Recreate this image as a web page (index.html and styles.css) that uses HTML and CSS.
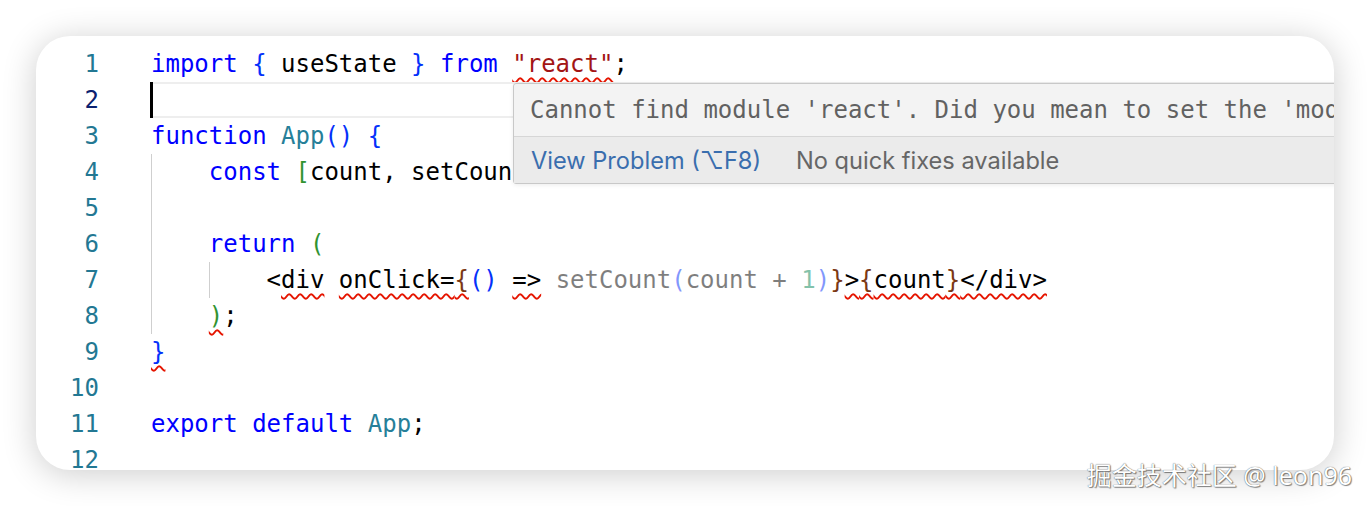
FILE: index.html
```html
<!DOCTYPE html>
<html lang="en">
<head>
<meta charset="utf-8">
<title>Editor</title>
<link rel="stylesheet" href="styles.css">
</head>
<body>
<div class="frame">
  <div class="card">
    <div class="line"><span class="ln">1</span><span class="code"><span class="kw">import</span> <span class="b1">{</span> useState <span class="b1">}</span> <span class="kw">from</span> <span class="sq"><span class="str">"react"</span></span>;</span></div>
    <div class="line active"><span class="ln">2</span><span class="code"><span class="cursor"></span></span></div>
    <div class="line"><span class="ln">3</span><span class="code"><span class="kw">function</span> <span class="ty">App</span><span class="b1">()</span> <span class="b1">{</span></span></div>
    <div class="line"><span class="ln">4</span><span class="code"><span class="ind"></span><span class="kw">const</span> <span class="b2">[</span>count, setCount<span class="b2">]</span> = useState<span class="b2">(</span><span class="num">0</span><span class="b2">)</span>;</span></div>
    <div class="line"><span class="ln">5</span><span class="code"><span class="ind"></span></span></div>
    <div class="line"><span class="ln">6</span><span class="code"><span class="ind"></span><span class="kw">return</span> <span class="b2">(</span></span></div>
    <div class="line"><span class="ln">7</span><span class="code"><span class="ind"></span><span class="ind"></span>&lt;<span class="sq">div</span> <span class="sq">onClick=<span class="b3">{</span></span><span class="b1">()</span> <span class="sq">=&gt;</span> <span class="fade">setCount<span class="b1">(</span>count + <span class="num">1</span><span class="b1">)</span></span><span class="b3">}</span><span class="sq">&gt;<span class="b3">{</span>count<span class="b3">}</span>&lt;/div&gt;</span></span></div>
    <div class="line"><span class="ln">8</span><span class="code"><span class="ind"></span><span class="sq"><span class="b2">)</span></span>;</span></div>
    <div class="line"><span class="ln">9</span><span class="code"><span class="sq"><span class="b1">}</span></span></span></div>
    <div class="line"><span class="ln">10</span><span class="code"></span></div>
    <div class="line"><span class="ln">11</span><span class="code"><span class="kw">export</span> <span class="kw">default</span> <span class="ty">App</span>;</span></div>
    <div class="line"><span class="ln">12</span><span class="code"></span></div>

    <div class="hover">
      <div class="msg">Cannot find module 'react'. Did you mean to set the 'moduleResolution' option to 'nodenext', or to add aliases to the 'paths' option?</div>
      <div class="status"><span class="link">View Problem (⌥F8)</span><span class="nofix">No quick fixes available</span></div>
    </div>
  </div>
</div>
<div class="wm">掘金技术社区 @ leon96</div>
</body>
</html>
```
FILE: styles.css
```css
html, body {
  margin: 0;
  padding: 0;
}
body {
  width: 1370px;
  height: 506px;
  background: #ffffff;
  position: relative;
  overflow: hidden;
}
.frame {
  padding: 36px 36px 0 36px;
}
.card {
  position: relative;
  box-sizing: border-box;
  width: 1298px;
  height: 434px;
  padding-top: 10px;
  border-radius: 34px;
  background: #ffffff;
  overflow: hidden;
  box-shadow: 0 4px 34px rgba(0, 0, 0, 0.2);
  font-family: "DejaVu Sans Mono", monospace;
  font-size: 24px;
  color: #000000;
}
.line {
  display: flex;
  height: 36px;
  line-height: 36px;
}
.ln {
  flex: none;
  width: 63px;
  text-align: right;
  color: #237893;
}
.active .ln {
  color: #0b216f;
}
.code {
  position: relative;
  flex: 1;
  margin-left: 51px;
  padding-left: 1px;
  white-space: pre;
}
.active .code {
  box-shadow: inset 0 2px 0 #eeeeee, inset 0 -2px 0 #eeeeee;
}
.cursor {
  position: absolute;
  left: 0;
  top: 0;
  width: 3px;
  height: 36px;
  background: #000000;
}
.ind {
  display: inline-block;
  width: 4ch;
  height: 36px;
  vertical-align: top;
  box-shadow: inset 1px 0 0 #cfcfcf;
}
.kw { color: #0000ff; }
.str { color: #a31515; }
.ty { color: #267f99; }
.num { color: #098658; }
.b1 { color: #0431fa; }
.b2 { color: #319331; }
.b3 { color: #7b3814; }
.fade { opacity: 0.5; }
.sq {
  text-decoration-line: underline;
  text-decoration-style: wavy;
  text-decoration-color: #e51400;
  text-decoration-thickness: 1.6px;
  text-underline-offset: 5px;
  text-decoration-skip-ink: none;
}
.hover {
  position: absolute;
  left: 477px;
  top: 47px;
  width: 1000px;
  border: 1px solid #c8c8c8;
  border-radius: 3px;
  background: #f3f3f3;
  box-shadow: 0 1px 4px rgba(0, 0, 0, 0.08);
}
.msg {
  height: 52px;
  line-height: 52px;
  padding-left: 16px;
  white-space: pre;
  color: #616161;
}
.status {
  display: flex;
  align-items: center;
  gap: 35px;
  height: 46px;
  padding-left: 17px;
  border-top: 1px solid #d6d6d6;
  background: #ebebeb;
  font-family: "Inter", "DejaVu Sans", sans-serif;
  font-size: 23.6px;
}
.link { color: #3a6eae; }
.nofix { color: #666666; }
.wm {
  position: absolute;
  right: 18px;
  top: 459px;
  font-family: "Noto Sans", "Noto Sans CJK SC", sans-serif;
  font-size: 25px;
  line-height: 32px;
  color: #ffffff;
  text-shadow: 0 0 1px #3a3a3a, 1px 1px 1px rgba(0, 0, 0, 0.45);
}
```
